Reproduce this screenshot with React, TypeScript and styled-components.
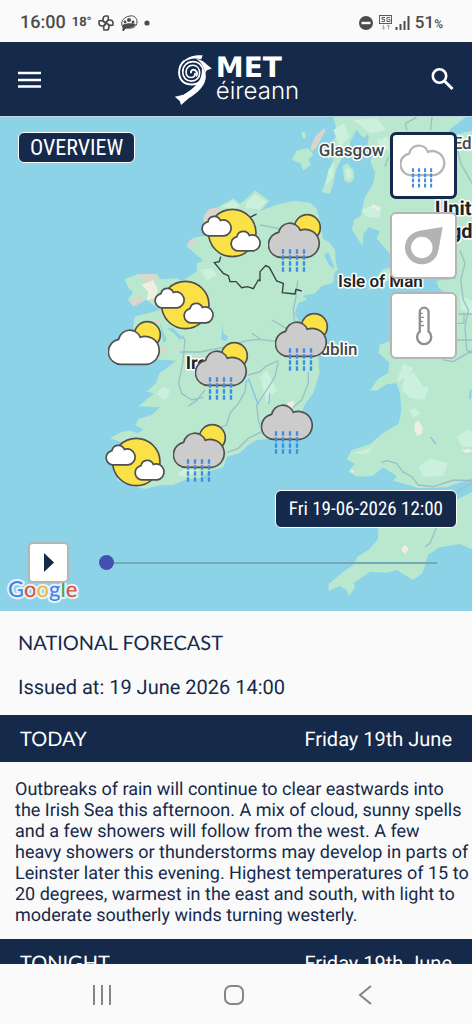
import React, { useState } from "react";
import styled, { createGlobalStyle, css } from "styled-components";

const navy = "#15294b";
const paper = "#fafafa";
const sans = `Roboto, "Liberation Sans", sans-serif`;
const lato = `Lato, "Liberation Sans", sans-serif`;
const narrow = `"Roboto Condensed", "Liberation Sans Narrow", Roboto, sans-serif`;

const GlobalStyle = createGlobalStyle`
  *, *::before, *::after { box-sizing: border-box; }
  body {
    margin: 0;
    background: ${paper};
    font-family: ${sans};
    color: ${navy};
    text-rendering: geometricPrecision;
  }
  h1, h2, p { margin: 0; font-weight: 400; }
  button { font: inherit; cursor: pointer; }
`;

const Screen = styled.div`
  display: flex;
  flex-direction: column;
  height: 100vh;
  background: ${paper};
`;

const StatusBar = styled.div`
  display: flex;
  flex: none;
  align-items: center;
  justify-content: space-between;
  height: 42px;
  padding: 4px 29px 0 20px;
  color: #4c4c4c;
  font-weight: 500;
`;

const StatusGroup = styled.div<{ $gap: number }>`
  display: flex;
  align-items: center;
  gap: ${(p) => p.$gap}px;
`;

const StatusText = styled.span<{ $size: number; $bold?: boolean }>`
  font-size: ${(p) => p.$size}px;
  font-weight: ${(p) => (p.$bold ? 700 : 500)};
  line-height: 20px;
`;

const Header = styled.header`
  display: grid;
  flex: none;
  grid-template-columns: 1fr auto 1fr;
  align-items: center;
  height: 75px;
  padding: 0 16px;
  background: ${navy};
  border-bottom: 1px solid #c4d6e0;
  color: #fff;
`;

const IconButton = styled.button<{ $end?: boolean }>`
  display: flex;
  justify-self: ${(p) => (p.$end ? "end" : "start")};
  padding: 0;
  border: 0;
  background: none;
  color: inherit;
`;

const Logo = styled.a`
  display: flex;
  align-items: center;
  gap: 3px;
  color: #fff;
  text-decoration: none;
`;

const LogoWords = styled.span`
  display: flex;
  flex-direction: column;
`;

const LogoMet = styled.span`
  font: 700 28px/24px "DejaVu Sans", sans-serif;
`;

const LogoEireann = styled.span`
  font: 300 24px/22px Inter, sans-serif;
`;

const Scroller = styled.main`
  flex: 1;
  min-height: 0;
  overflow-y: auto;
  scrollbar-width: none;
`;

const MapFrame = styled.section`
  position: relative;
  aspect-ratio: 472 / 494;
  overflow: hidden;
  background: #8cd3e8;
`;

const MapDrawing = styled.svg`
  display: block;
  width: 100%;
  height: 100%;
`;

const Pin = styled.svg<{ $x: number; $y: number; $w: number }>`
  position: absolute;
  left: ${(p) => (p.$x / 1416) * 100}%;
  top: ${(p) => (p.$y / 1482) * 100}%;
  width: ${(p) => (p.$w / 1416) * 100}%;
`;

const MapOverlay = styled.div`
  position: absolute;
  inset: 0;
  display: flex;
  flex-direction: column;
  justify-content: space-between;
  padding: 15px 15px 28px 18px;
`;

const OverlayTop = styled.div`
  display: flex;
  align-items: flex-start;
  justify-content: space-between;
`;

const OverlayBottom = styled.div`
  display: flex;
  flex-direction: column;
  gap: 14px;
`;

const badge = css`
  border: 1px solid #fff;
  border-radius: 6px;
  background: ${navy};
  color: #fff;
`;

const RegionButton = styled.button`
  ${badge}
  padding: 0 11px;
  font: 400 22px/29px ${narrow};
`;

const TimeBadge = styled.time`
  ${badge}
  align-self: flex-end;
  padding: 0 13px;
  font: 400 19px/36px ${narrow};
`;

const LayerList = styled.div`
  display: flex;
  flex-direction: column;
  gap: 13px;
`;

const LayerButton = styled.button<{ $active?: boolean }>`
  display: flex;
  align-items: center;
  justify-content: center;
  width: 67px;
  height: 67px;
  padding: 0;
  border: ${(p) => (p.$active ? `3px solid ${navy}` : "2px solid #b5b5b5")};
  border-radius: 6px;
  background: #fff;
`;

const PlayRow = styled.div`
  display: flex;
  align-items: center;
  gap: 30px;
  padding: 0 20px 0 10px;
`;

const PlayButton = styled.button`
  display: flex;
  flex: none;
  align-items: center;
  justify-content: center;
  width: 41px;
  height: 41px;
  padding: 0;
  border: 2px solid #b5b5b5;
  border-radius: 5px;
  background: #fff;
`;

const TimeSlider = styled.input`
  flex: 1;
  min-width: 0;
  height: 15px;
  margin: 0;
  appearance: none;
  background: linear-gradient(#73a9b8, #73a9b8) right center / calc(100% - 8px) 2px no-repeat;
  &::-webkit-slider-thumb {
    appearance: none;
    width: 15px;
    height: 15px;
    border-radius: 50%;
    background: #4350b0;
  }
`;

const Intro = styled.section`
  display: flex;
  flex-direction: column;
  gap: 20px;
  padding: 20px 18px 15px;
`;

const Title = styled.h1`
  font: 400 20px/24px ${lato};
`;

const Issued = styled.p`
  font-size: 20px;
  line-height: 25px;
`;

const DayBar = styled.div`
  display: flex;
  align-items: center;
  justify-content: space-between;
  height: 47px;
  padding: 0 20px;
  background: ${navy};
  color: #fff;
  font-size: 20px;
`;

const DayName = styled.h2`
  font: 400 20px/24px ${lato};
`;

const Forecast = styled.p`
  padding: 17px 2px 13px 15px;
  font-size: 18px;
  line-height: 21px;
`;

const NavBar = styled.nav`
  display: grid;
  flex: none;
  grid-template-columns: repeat(3, 1fr);
  height: 60px;
  padding: 2px 40px 0 36px;
  background: ${paper};
`;

const NavButton = styled.button`
  display: flex;
  align-items: center;
  justify-content: center;
  padding: 0;
  border: 0;
  background: none;
`;

const CLOUD = "M40 129A38 38 0 0 1 28 54A34 34 0 0 1 93 48A42 42 0 1 1 113 129Z";
const INK = "#505050";

function Rain() {
  return (
    <path
      d="M41 105V173M62 105V173M83 105V173M104 105V173"
      stroke="#3f8be6"
      strokeWidth="7"
      strokeDasharray="13 5"
      fill="none"
    />
  );
}

type Kind = "sunRain" | "rain" | "sunCloud" | "partly";

const pins: { kind: Kind; x: number; y: number; place: string }[] = [
  { kind: "partly", x: 607, y: 297, place: "Donegal" },
  { kind: "sunRain", x: 808, y: 313, place: "Belfast" },
  { kind: "partly", x: 465, y: 511, place: "Mayo" },
  { kind: "sunCloud", x: 327, y: 635, place: "Galway" },
  { kind: "sunRain", x: 829, y: 611, place: "Dublin" },
  { kind: "sunRain", x: 587, y: 697, place: "Midlands" },
  { kind: "rain", x: 786, y: 859, place: "Wexford" },
  { kind: "sunRain", x: 522, y: 943, place: "Cork" },
  { kind: "partly", x: 317, y: 982, place: "Kerry" },
];

function WeatherPin({ kind, x, y, place }: (typeof pins)[number]) {
  return (
    <Pin $x={x - 3} $y={y - 26} $w={188} viewBox="-4 -4 188 182" role="img" aria-label={place}>
      {kind === "partly" ? (
        <g stroke={INK} strokeWidth="5">
          <circle cx="90" cy="74" r="71" fill="#fae246" />
          <g fill="#fff" strokeWidth="9">
            <path d={CLOUD} transform="translate(1 9) scale(.57)" />
            <path d={CLOUD} transform="translate(88 54) scale(.57)" />
          </g>
        </g>
      ) : (
        <>
          {kind !== "rain" && <circle cx="114" cy="40" r="39" fill="#fae246" stroke={INK} strokeWidth="5" />}
          <path d={CLOUD} fill={kind === "sunCloud" ? "#fff" : "#ccc"} stroke={INK} strokeWidth="5" />
          {kind !== "sunCloud" && <Rain />}
        </>
      )}
    </Pin>
  );
}

function Geography() {
  return (
    <MapDrawing viewBox="0 21 1416 1482" role="img" aria-label="Map of Ireland">
      <g fill="#b9e8cf">
        {/* Ireland */}
        <path d="M735 270L765 241L808 272L782 302L830 284L880 272L930 278L950 296L962 340L968 385L990 400L1005 420L1007 455L1014 482L1004 484L1000 464L985 425L972 436L985 462L1008 484L1002 495L1000 518L965 528L945 550L908 558L922 568L895 580L884 610L900 640L935 690L955 740L958 790L940 850L917 880L905 905L910 935L870 980L820 985L770 990L745 1005L718 1030L680 1040L670 1072L632 1082L600 1105L560 1108L520 1125L480 1126L435 1137L395 1128L350 1110L365 1085L335 1065L320 1030L372 1000L330 984L365 965L390 962L412 970L430 960L406 945L415 928L455 915L480 892L415 889L450 860L462 850L440 845L468 820L478 790L500 775L528 752L440 746L400 735L400 700L420 680L400 655L404 620L435 612L480 600L440 570L400 582L384 568L400 545L386 536L374 508L415 492L470 492L480 508L530 505L548 512L590 485L592 460L610 452L560 408L580 384L620 376L612 330L640 300L665 285L700 265L720 282Z" />
        {/* Scottish islands and Kintyre */}
        <path d="M875 150L890 122L925 114L940 135L925 148L932 165L910 182L902 160ZM904 64L917 68L916 86L908 84ZM1028 168L1042 160L1060 180L1063 205L1050 220L1033 212ZM1000 21L1105 21L1118 60L1090 84L1070 60L1050 95L1048 130L1024 148L1008 180L1000 222L988 252L966 246L985 185L1005 135L985 148L978 130L1012 70Z" />
        {/* Great Britain */}
        <path d="M1095 21L1416 21L1416 1105L1340 1132L1252 1134L1230 1126L1180 1112L1190 1098L1165 1082L1150 1072L1118 1098L1072 1100L1045 1085L1064 1062L1040 1048L1055 1020L1110 1003L1145 972L1195 942L1204 905L1200 850L1190 820L1160 822L1130 842L1110 840L1135 806L1165 788L1168 758L1135 728L1140 704L1180 690L1320 700L1340 640L1360 560L1316 535L1310 512L1370 506L1340 470L1290 478L1232 440L1170 432L1130 385L1140 364L1106 352L1090 372L1088 408L1056 360L1062 330L1082 318L1095 260L1118 225L1126 190L1100 130L1106 80Z" />
        <path d="M1105 540L1112 522L1150 478L1180 470L1176 500L1140 534Z" />
        {/* Cornwall and Devon */}
        <path d="M1416 1145L1360 1175L1300 1200L1135 1240L1134 1288L1105 1320L1072 1340L1060 1365L1030 1385L986 1422L986 1444L1018 1428L1040 1440L1046 1458L1066 1432L1060 1420L1110 1385L1160 1388L1190 1380L1240 1410L1268 1388L1284 1335L1318 1312L1380 1302L1416 1318Z" />
      </g>
      {/* Firths and bays */}
      <g fill="#8cd3e8">
        <path d="M1416 21L1398 21L1350 58L1340 80L1416 62ZM668 640L664 690L678 694L684 680L670 670ZM500 655L520 668L540 690L548 684L520 655ZM480 640L500 690L490 700ZM1090 84L1120 130L1110 160L1080 110Z" />
        <path d="M745 320L756 318L748 345Z" />
      </g>
      {/* Higher ground */}
      <g fill="#cbf0de">
        <path d="M740 275L765 252L800 275L778 298L735 294ZM665 290L700 272L720 288L700 300ZM600 480L635 475L650 495L620 512ZM470 850L488 832L508 838L505 860L490 870ZM1000 60L1030 40L1050 80L1020 110ZM1060 30L1130 25L1160 60L1110 70ZM1130 90L1165 80L1168 120L1140 115ZM985 180L1002 160L1000 200L978 225ZM1035 180L1050 175L1056 200L1042 208ZM1085 300L1120 285L1145 290L1138 325L1100 320ZM1215 800L1240 785L1270 830L1285 830L1275 870L1230 865L1205 840ZM1228 900L1245 895L1262 910L1240 925ZM1255 1070L1290 1045L1345 1060L1330 1098L1270 1100ZM1372 980L1400 960L1416 965L1416 1010L1385 1010ZM1060 1030L1110 1015L1130 1000L1100 1032ZM1190 815L1210 760L1240 775L1220 800ZM560 1070L600 1080L560 1100L530 1095ZM780 800L800 780L830 840L800 880ZM1380 560L1416 570L1416 610L1385 600Z" />
      </g>
      <g fill="#dbd5cb">
        <path d="M610 320L628 296L660 292L650 320L612 340ZM560 405L572 388L586 392L580 408ZM410 493L468 492L470 510L440 520L425 505ZM384 568L405 570L425 556L432 574L400 590ZM932 112L945 80L972 55L976 62L950 112L935 125ZM458 626L480 632L480 640L460 638ZM484 706L496 714L498 732L486 732Z" />
      </g>
      <g fill="#f1ede2">
        <path d="M425 525L460 510L474 540L466 565L440 570L445 545ZM1244 940L1256 932L1268 950L1266 972L1252 978L1243 962ZM1206 1312L1216 1305L1226 1316L1216 1332L1206 1324ZM862 878L882 872L880 890L864 890Z" />
        <path d="M1118 282L1140 296L1134 302L1114 290ZM1385 1020L1410 1016L1416 1026L1395 1028ZM1050 1078L1062 1082L1060 1090Z" />
      </g>
      {/* Roads */}
      <g fill="none" stroke="#9bbfc8" strokeWidth="4" strokeLinejoin="round">
        <path d="M780 345L835 355M893 512L888 560L880 600L884 640M540 726L600 726L680 710L740 692L780 688L830 695M545 676L555 690L548 760L536 820L545 850L575 870L610 862M565 888L590 872L615 840M756 670L785 690M815 630L850 650L870 660M740 810L735 845L715 880L690 910L680 945L655 955M745 795L780 785L795 770L835 752M835 755L825 800L800 840L770 885L775 930L785 960M925 785L925 820L905 870L880 892M680 1028L715 1015L745 985L785 965" />
        <path d="M1220 60L1216 40L1250 22M1296 21L1292 60M1370 110L1382 160L1416 220M1380 420L1395 460L1382 510L1390 570L1405 600L1395 650L1400 720L1416 730M1375 612L1416 612M1370 690L1416 690M1330 750L1360 755L1416 722M1145 1058L1160 1052L1190 1060L1208 1085L1235 1100L1255 1125L1300 1130L1360 1110L1416 1112M1310 1250L1290 1300L1276 1310M1155 170L1165 140M1370 1145L1416 1120M1372 640L1392 640L1392 612" />
      </g>
      <path d="M745 805L775 885M810 850L806 882M1292 982L1308 1002M1412 840L1410 866" fill="none" stroke="#7fc4ea" strokeWidth="4" />
      {/* Border */}
      <path
        d="M662 440L658 455L643 458L670 490L685 497L690 515L708 515L725 533L742 530L760 536L775 510L780 512L780 485L797 467L808 472L830 513L850 520L847 548L885 552L888 538L905 543M750 322L770 312"
        fill="none"
        stroke="#333f3c"
        strokeWidth="4"
      />
      <g
        fontFamily={sans}
        fontSize="51"
        fill="#3b4a4d"
        stroke="#fff"
        strokeWidth="9"
        strokeLinejoin="round"
        paintOrder="stroke"
        fontWeight="500"
      >
        <text x="956" y="139">Glasgow</text>
        <text x="1358" y="117">Edinburgh</text>
        <text x="928" y="734">Dublin</text>
        <g fill="#1d2426">
          <text x="1014" y="531" fontWeight="600">Isle of Man</text>
          <text x="557" y="777" fontSize="54" fontWeight="700">Ireland</text>
          <g fontSize="60" fontWeight="700">
            <text x="1305" y="314">United</text>
            <text x="1262" y="384">Kingdom</text>
          </g>
        </g>
      </g>
      <text
        x="24"
        y="1460"
        fontFamily={lato}
        fontSize="66"
        fontWeight="500"
        stroke="#e4f4fa"
        strokeWidth="12"
        strokeLinejoin="round"
        paintOrder="stroke"
      >
        <tspan fill="#4a7fe8">G</tspan>
        <tspan fill="#d9513f">o</tspan>
        <tspan fill="#efb93f">o</tspan>
        <tspan fill="#4a7fe8">g</tspan>
        <tspan fill="#4aa564">l</tspan>
        <tspan fill="#d9513f">e</tspan>
      </text>
    </MapDrawing>
  );
}

function SwirlMark() {
  return (
    <svg width="40" height="53" viewBox="510 155 120 160" fill="none" stroke="#fff" strokeWidth="5" aria-hidden="true">
      <path d="M545 178C532 188 528 200 528 213C528 238 545 250 566 250C588 250 602 236 602 214" strokeWidth="6" />
      <path d="M602 216C602 196 589 181 570 181C552 181 539 194 539 212C539 229 550 240 565 240C580 240 590 229 590 215C590 202 582 192 569 192C557 192 549 201 549 212C549 223 556 229 564 229C573 229 577 223 576 215" />
      <path d="M564 216C562 208 569 203 576 207C583 211 584 219 579 226" strokeWidth="6" />
      <path d="M536 186C550 166 575 160 599 162L595 174C574 168 556 172 536 186Z" fill="#fff" stroke="none" />
      <path d="M578 172C594 174 606 182 615 193L627 202L612 207L606 216C604 198 596 182 578 172Z" fill="#fff" stroke="none" />
      <path d="M597 204L607 212C616 245 589 272 558 291L534 312L530 300L515 287L541 281C574 262 598 240 597 204Z" fill="#fff" stroke="none" />
    </svg>
  );
}

export default function App() {
  const [layer, setLayer] = useState("rain");
  const [hour, setHour] = useState(0);
  return (
    <Screen>
      <GlobalStyle />
      <StatusBar>
        <StatusGroup $gap={6}>
          <StatusText $size={18}>16:00</StatusText>
          <StatusText $size={13} $bold>18°</StatusText>
          <svg width="16" height="16" viewBox="0 0 16 16" fill="none" stroke="#4c4c4c" strokeWidth="1.600" strokeLinejoin="round" aria-hidden="true">
            <path d="M8 8C4 7 4 1 8 1H10C11 4 10 6 8 8C9 4 15 4 15 8V10C12 11 10 10 8 8C12 9 12 15 8 15H6C5 12 6 10 8 8C7 12 1 12 1 8V6C4 5 6 6 8 8Z" />
          </svg>
          <svg width="18" height="17" viewBox="0 0 18 17" aria-hidden="true">
            <path d="M10 1C14 0 17 3 17 7C17 12 12 14 6 13L3 16L3 12C0 9 2 2 10 1Z" fill="none" stroke="#4c4c4c" />
            <path d="M2 10C6 8 13 8 16 9C14 13 10 13 6 13L3 16L3 12Z" fill="#4c4c4c" />
            <circle cx="9" cy="5" r="2" fill="#4c4c4c" />
            <circle cx="5" cy="7" r="1.400" fill="#4c4c4c" />
            <circle cx="13" cy="7" r="1.400" fill="#4c4c4c" />
          </svg>
          <svg width="8" height="6" viewBox="4 0 8 6" aria-hidden="true">
            <circle cx="7" cy="3" r="2.600" fill="#4c4c4c" />
          </svg>
        </StatusGroup>
        <StatusGroup $gap={4}>
          <svg width="54" height="18" viewBox="0 0 54 18" aria-hidden="true">
            <circle cx="9" cy="9" r="7" fill="#4c4c4c" />
            <rect x="4.500" y="7.800" width="9" height="2.400" fill="#fafafa" />
            <rect x="22.500" y="1.500" width="12" height="8" fill="none" stroke="#5c5c5c" />
            <path d="M28 3.500H25V5.300H27.500V7.500H24.500M33 3.500H30V7.500H33V5.500H31.500" fill="none" stroke="#5c5c5c" />
            <path d="M26.500 11V15M25 13.500L26.500 15.300L28 13.500M31.500 15.300V11M30 12.500L31.500 10.800L33 12.500" fill="none" stroke="#a5a5a5" />
            <path d="M39.500 16V13M43.500 16V10M47.500 16V7M51.500 16V2" stroke="#4c4c4c" strokeWidth="2" />
          </svg>
          <div>
            <StatusText $size={17}>51</StatusText>
            <StatusText $size={12}>%</StatusText>
          </div>
        </StatusGroup>
      </StatusBar>

      <Header>
        <IconButton aria-label="Menu">
          <svg width="27" height="27" viewBox="0 0 27 27" stroke="#fff" strokeWidth="2.600" aria-hidden="true">
            <path d="M2 7H25M2 14H25M2 20.500H25" />
          </svg>
        </IconButton>
        <Logo href="#home" aria-label="Met Éireann">
          <SwirlMark />
          <LogoWords>
            <LogoMet>MET</LogoMet>
            <LogoEireann>éireann</LogoEireann>
          </LogoWords>
        </Logo>
        <IconButton $end aria-label="Search">
          <svg width="27" height="27" viewBox="0 0 27 27" fill="none" stroke="#fff" strokeWidth="2.600" aria-hidden="true">
            <circle cx="10.500" cy="10" r="6.700" />
            <path d="M15.500 15L23.500 23" strokeWidth="3" />
          </svg>
        </IconButton>
      </Header>

      <Scroller>
        <MapFrame>
          <Geography />
          {pins.map((p) => (
            <WeatherPin key={p.place} {...p} />
          ))}
          <MapOverlay>
            <OverlayTop>
              <RegionButton>OVERVIEW</RegionButton>
              <LayerList>
                <LayerButton $active={layer === "rain"} onClick={() => setLayer("rain")} aria-label="Rain">
                  <svg width="47" height="47" viewBox="-4 14 163 163" aria-hidden="true">
                    <path d={CLOUD} fill="#fff" stroke="#b5b5b5" strokeWidth="8" />
                    <Rain />
                  </svg>
                </LayerButton>
                <LayerButton $active={layer === "wind"} onClick={() => setLayer("wind")} aria-label="Wind">
                  <svg width="42" height="42" viewBox="1202 347 125 125" aria-hidden="true">
                    <path
                      d="M1320 353L1308 420C1304 447 1284 464 1258 464A50 50 0 0 1 1208 414C1208 386 1228 367 1256 363ZM1258 382A32 32 0 1 0 1258 446A32 32 0 1 0 1258 382Z"
                      fill="#b3b3b3"
                      fillRule="evenodd"
                    />
                  </svg>
                </LayerButton>
                <LayerButton $active={layer === "temp"} onClick={() => setLayer("temp")} aria-label="Temperature">
                  <svg width="42" height="42" viewBox="1208 583 125 125" fill="none" stroke="#8f8f8f" strokeWidth="7" aria-hidden="true">
                    <path d="M1258 662V604A13 13 0 0 1 1284 604V662A21 21 0 1 1 1258 662Z" />
                    <path d="M1258 608H1267M1258 620H1271M1258 632H1267M1258 644H1271" strokeWidth="4" />
                  </svg>
                </LayerButton>
              </LayerList>
            </OverlayTop>
            <OverlayBottom>
              <TimeBadge dateTime="2026-06-19T12:00">Fri 19-06-2026 12:00</TimeBadge>
              <PlayRow>
                <PlayButton aria-label="Play">
                  <svg width="10" height="19" viewBox="0 0 10 19" aria-hidden="true">
                    <path d="M0 0L10 9.500L0 19Z" fill={navy} />
                  </svg>
                </PlayButton>
                <TimeSlider
                  type="range"
                  min={0}
                  max={48}
                  value={hour}
                  onChange={(e) => setHour(Number(e.target.value))}
                  aria-label="Forecast time"
                />
              </PlayRow>
            </OverlayBottom>
          </MapOverlay>
        </MapFrame>

        <Intro>
          <Title>NATIONAL FORECAST</Title>
          <Issued>Issued at: 19 June 2026 14:00</Issued>
        </Intro>
        <article>
          <DayBar>
            <DayName>TODAY</DayName>
            <span>Friday 19th June</span>
          </DayBar>
          <Forecast>
            Outbreaks of rain will continue to clear eastwards into the Irish Sea this afternoon. A mix of cloud, sunny
            spells and a few showers will follow from the west. A few heavy showers or thunderstorms may develop in
            parts of Leinster later this evening. Highest temperatures of 15 to 20 degrees, warmest in the east and
            south, with light to moderate southerly winds turning westerly.
          </Forecast>
        </article>
        <article>
          <DayBar>
            <DayName>TONIGHT</DayName>
            <span>Friday 19th June</span>
          </DayBar>
        </article>
      </Scroller>

      <NavBar>
        <NavButton aria-label="Recent apps">
          <svg width="20" height="20" viewBox="0 0 20 20" stroke="#858585" strokeWidth="2" aria-hidden="true">
            <path d="M2 0V20M10 0V20M18 0V20" />
          </svg>
        </NavButton>
        <NavButton aria-label="Home">
          <svg width="20" height="20" viewBox="0 0 20 20" fill="none" stroke="#858585" strokeWidth="2" aria-hidden="true">
            <rect x="1" y="1" width="18" height="18" rx="6" />
          </svg>
        </NavButton>
        <NavButton aria-label="Back">
          <svg width="20" height="20" viewBox="0 0 20 20" fill="none" stroke="#858585" strokeWidth="2" aria-hidden="true">
            <path d="M15 1L4 10L15 19" />
          </svg>
        </NavButton>
      </NavBar>
    </Screen>
  );
}
